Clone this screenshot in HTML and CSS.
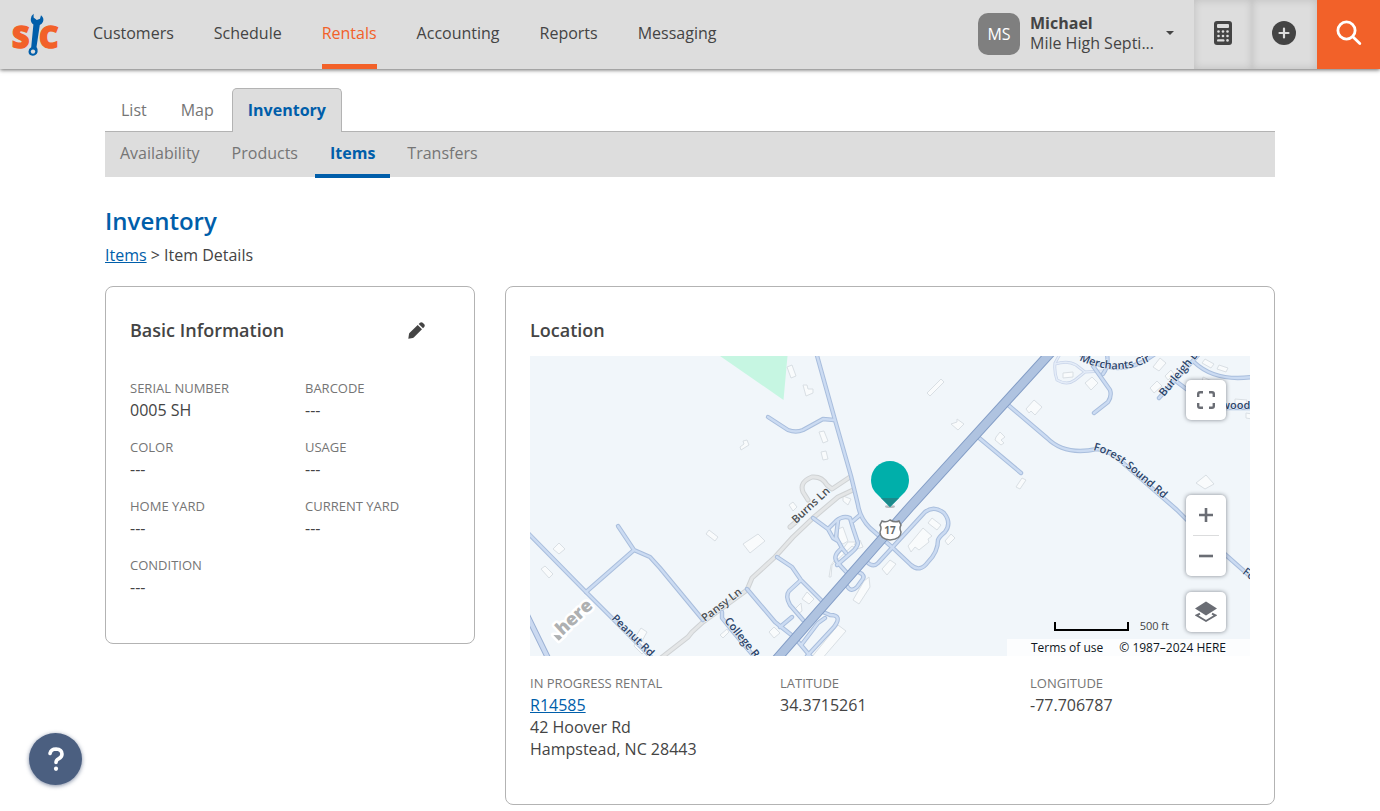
FILE: index.html
```html
<!DOCTYPE html>
<html lang="en">
<head>
<meta charset="utf-8">
<meta name="viewport" content="width=device-width, initial-scale=1">
<title>Inventory - Item Details</title>
<link rel="stylesheet" href="styles.css">
</head>
<body>
<header class="topbar">
  <a class="logo" href="#" aria-label="Home">
    <svg width="50" height="44" viewBox="10 13 50 44">
      <text class="logo-letter" x="12" y="47.500">S</text>
      <text class="logo-letter" x="39" y="47.500">C</text>
      <path class="logo-gap" d="M31 14 L30.500 19 L33 24 L31 46 L28 50 A4.700 4.700 0 1 0 37 53 L38 46 L40.500 26 L44 22 L43.500 16 L40 15 L36 19 Z"/>
      <path class="logo-wrench" d="M33.600 13.800 L33.600 17.500 L36.800 20 L40 18.800 L41 15.300 Q44.400 18 43 21.800 Q42 24 39.800 25 L36.500 47 Q38.200 49 37.600 52 Q36.300 55.800 32.600 55.800 Q28.500 55.300 28.500 51.500 Q28.600 48.500 31.200 47.200 L33.400 24.500 Q30.600 22.500 30.800 19 Q31.100 15.500 33.600 13.800 Z"/>
      <circle class="logo-hole" cx="33" cy="51.600" r="2.200"/>
    </svg>
  </a>
  <nav class="mainnav">
    <a href="#">Customers</a>
    <a href="#">Schedule</a>
    <a href="#" class="active">Rentals</a>
    <a href="#">Accounting</a>
    <a href="#">Reports</a>
    <a href="#">Messaging</a>
  </nav>
  <button class="user" type="button">
    <span class="avatar">MS</span>
    <span class="user-text"><strong>Michael</strong><span>Mile High Septi...</span></span>
    <span class="caret"></span>
  </button>
  <div class="actions">
    <button class="action calc" type="button" aria-label="Calculator">
      <svg width="18" height="24" viewBox="0 0 18 24">
        <rect width="18" height="24" rx="3" fill="#444"/>
        <rect x="3" y="3" width="12" height="4" rx="1" fill="#ddd"/>
        <g fill="#ddd">
          <circle cx="4.500" cy="10.500" r="1.300"/><circle cx="9" cy="10.500" r="1.300"/><circle cx="13.500" cy="10.500" r="1.300"/>
          <circle cx="4.500" cy="15" r="1.300"/><circle cx="9" cy="15" r="1.300"/><circle cx="13.500" cy="15" r="1.300"/>
          <rect x="3" y="18.200" width="7.500" height="2.400" rx="1.200"/><circle cx="13.500" cy="19.400" r="1.300"/>
        </g>
      </svg>
    </button>
    <button class="action add" type="button" aria-label="Add">
      <svg width="24" height="24" viewBox="0 0 24 24">
        <circle cx="12" cy="12" r="12" fill="#444"/>
        <path d="M12 7.500v9M7.500 12h9" stroke="#ddd" stroke-width="2.200" stroke-linecap="round"/>
      </svg>
    </button>
    <button class="action search" type="button" aria-label="Search">
      <svg width="26" height="26" viewBox="0 0 26 26" fill="none" stroke="#fff" stroke-width="2.800" stroke-linecap="round">
        <circle cx="10.500" cy="10.500" r="8.600"/><path d="M16.800 16.800l7 6.800"/>
      </svg>
    </button>
  </div>
</header>

<main class="container">
  <nav class="tabs">
    <a href="#">List</a>
    <a href="#">Map</a>
    <a href="#" class="active">Inventory</a>
  </nav>
  <nav class="subtabs">
    <a href="#">Availability</a>
    <a href="#">Products</a>
    <a href="#" class="active">Items</a>
    <a href="#">Transfers</a>
  </nav>

  <h1>Inventory</h1>
  <p class="crumbs"><a href="#">Items</a> &gt; Item Details</p>

  <div class="cards">
    <section class="card basic">
      <div class="card-head basic-head">
        <h2>Basic Information</h2>
        <button class="edit" type="button" aria-label="Edit basic information">
          <svg width="17" height="17" viewBox="0 0 17 17" fill="#444">
            <path d="M0.300 16.700 L1 12 Q1.200 11.300 1.700 10.800 L9.700 3 L14 7.300 L6 15.200 Q5.400 15.800 4.800 15.900 Z"/>
            <path d="M10.700 2 L12 0.800 Q13.200 -0.300 14.700 0.700 L16.300 2.300 Q17.300 3.700 16.200 5 L15 6.300 Z"/>
          </svg>
        </button>
      </div>
      <dl class="fields two">
        <div><dt>SERIAL NUMBER</dt><dd>0005 SH</dd></div>
        <div><dt>BARCODE</dt><dd>---</dd></div>
        <div><dt>COLOR</dt><dd>---</dd></div>
        <div><dt>USAGE</dt><dd>---</dd></div>
        <div><dt>HOME YARD</dt><dd>---</dd></div>
        <div><dt>CURRENT YARD</dt><dd>---</dd></div>
        <div><dt>CONDITION</dt><dd>---</dd></div>
      </dl>
    </section>

    <section class="card">
      <div class="card-head location-head"><h2>Location</h2></div>
      <div class="map">
        <svg class="map-canvas" viewBox="530 356 720 300" preserveAspectRatio="xMidYMid slice" role="img" aria-label="Map of the item location">
          <defs>
            <g id="local">
              <path d="M525 530L586 592L612 618L652 658"/>
              <path d="M618 526L634 550L650 557L660 568L703 620M634 550L586 592"/>
              <path d="M722 612L722 618L730 628L757 660M747 589L775 622L780 626L794 637M780 627L792 617"/>
              <path d="M816 352L835 420L851 476L858 505Q860 518 870 528L893 548L911 565Q920 573 928 562Q938 552 938 540Q939 537 945 532Q952 523 944 513Q934 505 925 512L878 563Q873 568 867 562"/>
              <path d="M768 417L788 430Q796 433 803 430L823 419L834 420"/>
              <path d="M978 437L1021 473"/>
              <path d="M1007 404L1047 438Q1065 456 1097 449Q1110 450 1123 463L1177 510L1190 523L1227 556L1252 578"/>
              <path d="M1080 354Q1118 382 1155 354M1093 366L1110 390Q1112 396 1108 402L1094 413M1107 354Q1109 366 1103 374"/>
              <path d="M1159 398L1199 354M1177 382L1197 397M1194 362Q1215 382 1252 377M1226 408L1252 408"/>
            </g>
            <g id="lanes">
              <path d="M813 518L828 529L836 521Q843 515 850 518L853 528L858 543Q857 548 852 552L837 565M828 529L833 538L838 541M838 521L836 537L842 548L846 553M842 548Q832 556 837 562L849 575M860 515L853 521"/>
              <path d="M855 570L862 574Q865 577 862 580L857 587Q851 593 847 586"/>
              <path d="M777 557L792 567L801 580L822 601M801 580L789 591Q785 596 790 605L803 620"/>
              <path d="M823 612L830 615Q843 615 834 627L807 656M825 618L818 623L802 644M795 638L811 657"/>
            </g>
            <g id="faint"><path d="M1103 371L1085 372L1075 380Q1067 386 1057 380Q1054 372 1055 363L1060 354M1055 364Q1068 360 1076 365L1085 372"/></g>
            <g id="lanes-grey">
              <path d="M661 658L688 637L692 632L703 622L747 590L752 578L775 557L793 537L813 518L838 497L853 490"/>
              <path d="M808 500L803 492Q799 482 812 477Q822 476 827 485L832 489L850 477M790 527L797 521"/>
            </g>
            <path id="p-merchants" d="M1079 360Q1118 379 1154 359"/>
            <path id="p-burleigh" d="M1164 397L1207 345"/>
            <path id="p-forest" d="M1093 450Q1112 455 1127 468L1174 508"/>
            <path id="p-burns" d="M796 524L842 481"/>
            <path id="p-pansy" d="M705 622L760 580"/>
            <path id="p-college" d="M724 621L766 673"/>
            <path id="p-peanut" d="M611 619L670 677"/>
          </defs>
          <rect x="-500" y="356" width="2800" height="300" fill="#f1f6fa"/>
          <path fill="#c6f6e2" d="M720 356H787.500L783.500 400Z"/>
          <g fill="#f9fbfc" stroke="#d9dfe4">
            <path d="M787 367l5-2 4 11-5 2zM803 385l4 0 1 4 5 0 0 4-7 3zM819 432l5-1 4 10-5 2zM821 452l5-1 2 8-5 1zM740 447l4-3-1-3 4-1 2 5-8 5zM927 393l14-14 3 3-14 14zM951 424l6-2 0-3 7 5-6 6z"/>
            <path d="M996 437l4-5 5 5-4 3 3 3-3 2-6-5zM1016 487l6-9 4 2-6 9zM1026 409l8-9 8 7-7 8-4-4-2 2zM1085 383l7-6 6 6-7 7zM1063 373l10-1 0 5-10 1zM1153 367l7-9 6 5-7 8zM1150 388l7-7 5 5-8 7zM1165 376l6-6 3 4-6 6z"/>
            <path d="M1205 359l9 5-3 4-9-5zM1219 365l9 3-2 4-9-3zM1203 377l9 4-2 5-8-4zM1235 399l12 1-1 6-11-1zM1246 413l6 1 0 5-6-1zM1196 483l10-8 8 9-9 5zM553 549l6-6 6 6-6 5zM541 569l4-3 8 8-4 4zM706 534l3-4 9 7-3 4zM743 544l15-10 7 7-15 12z"/>
            <path d="M636 636l5-8 6 4-5 9 7 6-7 7-8-8 2-5zM720 635l7-6 2 3-6 6zM769 632l5-5 6 6-6 5zM789 505l4-3 4 5-4 4zM838 529l5-2 5 14-5 3-4-2zM829 577l2-12 17-23 8 0-2 3 6-5 3 7-6 2-5-3-20 19-1 12zM843 496l8 3-3 6-5-4z"/>
            <path d="M882 569l8-9 6 4-9 11zM908 546l15-18 9 8-4 3 1 3-10 8-4-3-4 5zM928 523l4-5 9 7-4 5zM945 541l6-7 4 4-7 7zM853 600l11-19 5-4 1 10-11 17zM802 599l5-7 7 7-5 5zM811 658l27-33 8 6-25 29zM793 611l8-8 1 8-4 3z"/>
          </g>
          <g fill="none" stroke-linejoin="round" stroke-linecap="round">
            <use href="#lanes-grey" stroke="#cfd2d4" stroke-width="5"/>
            <use href="#lanes-grey" stroke="#e4e6e7" stroke-width="3"/>
            <use href="#faint" stroke="#c9d5e9" stroke-width="3"/>
            <use href="#faint" stroke="#e4ecf8" stroke-width="1.500"/>
            <use href="#lanes" stroke="#a9bedd" stroke-width="4.400"/>
            <use href="#local" stroke="#a9bedd" stroke-width="4.400"/>
            <use href="#lanes" stroke="#cfdef3" stroke-width="2.400"/>
            <use href="#local" stroke="#cbdbf2" stroke-width="2.400"/>
            <path d="M527 615L549 660" stroke="#9bb1d4" stroke-width="6"/>
            <path d="M527 615L549 660" stroke="#cbdaf1" stroke-width="4"/>
            <path d="M1053 350L910 507L775 661" stroke="#839dc6" stroke-width="10"/>
            <path d="M1053 350L910 507L775 661" stroke="#afc3e0" stroke-width="8"/>
          </g>
          <g class="road-names">
            <text><textPath href="#p-merchants">Merchants Cir</textPath></text>
            <text><textPath href="#p-burleigh">Burleigh Dr</textPath></text>
            <text><textPath href="#p-forest">Forest Sound Rd</textPath></text>
            <text class="grey"><textPath href="#p-burns">Burns Ln</textPath></text>
            <text class="grey"><textPath href="#p-pansy">Pansy Ln</textPath></text>
            <text><textPath href="#p-college">College Rd</textPath></text>
            <text><textPath href="#p-peanut">Peanut Rd</textPath></text>
            <text x="1221" y="409">wood</text>
            <text transform="translate(1242 573) rotate(38)">Forest</text>
          </g>
          <g transform="translate(562 631) rotate(-43)">
            <path d="M-9 -3L-1 5H-9Z" fill="#aeb0b1" stroke="#fff" stroke-width="5" stroke-linejoin="round" paint-order="stroke"/>
            <text class="here" x="-3" y="4">here</text>
          </g>
          <path d="M882 521Q886 523 890 520Q895 523 899 521L901 525Q899 528 901 532Q901 539 890 540Q880 539 880 532Q882 528 880 525Z" fill="#fff" stroke="#777a7c" stroke-width="1.500"/>
          <text class="shield" x="890" y="534">17</text>
          <ellipse cx="890" cy="506.500" rx="5" ry="1.500" fill="#b7bcc0"/>
          <path d="M890 507L875 492Q871 487 871 480A19 19 0 0 1 909 480Q909 487 905 492Z" fill="#00afaa"/>
          <path d="M881 498H899L890 507Z" fill="#1a8a8b"/>
        </svg>
        <button class="map-btn fullscreen" type="button" aria-label="Full screen">
          <svg width="18" height="18" viewBox="0 0 18 18" fill="none" stroke="#6a6d74" stroke-width="2.400"><path d="M1.200 6V3Q1.200 1.200 3 1.200H6M12 1.200H15Q16.800 1.200 16.800 3V6M16.800 12V15Q16.800 16.800 15 16.800H12M6 16.800H3Q1.200 16.800 1.200 15V12"/></svg>
        </button>
        <div class="zoom">
          <button type="button" aria-label="Zoom in"><svg width="14" height="14" viewBox="0 0 14 14" stroke="#6a6d74" stroke-width="2.600"><path d="M7 0V14M0 7H14"/></svg></button>
          <button type="button" aria-label="Zoom out"><svg width="14" height="14" viewBox="0 0 14 14" stroke="#6a6d74" stroke-width="2.600"><path d="M0 7H14"/></svg></button>
        </div>
        <button class="map-btn layers" type="button" aria-label="Map layers">
          <svg width="22" height="22" viewBox="0 0 22 22"><path d="M11 0.500L22 7.500L11 14.500L0 7.500Z" fill="#6a6d74"/><path d="M5 12.600L1.500 14.300L11 20L20.500 14.300L17 12.600" fill="none" stroke="#6a6d74" stroke-width="1.900"/></svg>
        </button>
        <div class="scale"><span class="scale-bar"></span>500 ft</div>
        <div class="map-legal"><a href="#">Terms of use</a><span>© 1987–2024 HERE</span></div>
      </div>
      <dl class="fields three">
        <div><dt>IN PROGRESS RENTAL</dt><dd><a href="#">R14585</a><br>42 Hoover Rd<br>Hampstead, NC 28443</dd></div>
        <div><dt>LATITUDE</dt><dd>34.3715261</dd></div>
        <div><dt>LONGITUDE</dt><dd>-77.706787</dd></div>
      </dl>
    </section>
  </div>
</main>

<button class="help" type="button" aria-label="Help">
  <svg width="18" height="24" viewBox="0 0 18 24" fill="none" stroke="#fff" stroke-width="3.600" stroke-linecap="round"><path d="M3 6.500Q4 2 9 2Q15 2.300 15 7Q15 10 11.500 11.800Q9 13.200 9 15.500"/><path d="M9 21.700V21.800" stroke-width="4.200"/></svg>
</button>
</body>
</html>
```

FILE: styles.css
```css
* { box-sizing: border-box; }

body {
  margin: 0;
  background: #fff;
  color: #444;
  font-family: "Open Sans", "Noto Sans", sans-serif;
  font-size: 16px;
  line-height: 22px;
}

button {
  margin: 0;
  padding: 0;
  border: 0;
  background: none;
  color: inherit;
  font: inherit;
  cursor: pointer;
}

svg { display: block; }
a { color: #005eaa; }
h1, h2, p, dl, dt, dd { margin: 0; }

/* Top bar */
.topbar {
  display: flex;
  align-items: stretch;
  height: 69px;
  background: #ddd;
  box-shadow: 0 1px 4px rgba(0, 0, 0, .6);
}

.logo { padding: 13px 0 0 10px; }
.logo-letter { font-size: 30px; font-weight: 800; fill: #f26129; stroke: #f26129; stroke-width: 1.4px; }
.logo-gap { fill: #ddd; }
.logo-wrench { fill: #005eaa; }
.logo-hole { fill: #ddd; }

.mainnav { display: flex; gap: 40px; margin-left: 33px; }
.mainnav a {
  padding-top: 22px;
  border-bottom: 5px solid transparent;
  color: #444;
  text-decoration: none;
}
.mainnav a.active { color: #f26129; border-color: #f26129; }

.user {
  display: flex;
  align-items: center;
  margin-left: auto;
  padding: 0 20px 2px 0;
  line-height: 20px;
  text-align: left;
}
.avatar {
  width: 42px;
  border-radius: 10px;
  background: #7f7f7f;
  color: #fff;
  line-height: 42px;
  text-align: center;
}
.user-text { display: flex; flex-direction: column; margin: 0 12px 0 10px; padding-bottom: 2px; }
.caret {
  border: 4px solid transparent;
  border-top-color: #444;
  border-bottom: 0;
  margin-bottom: 2px;
}

.actions { display: flex; }
.action {
  display: flex;
  align-items: center;
  justify-content: center;
  padding-bottom: 3px;
  box-shadow: inset 0 0 9px rgba(0, 0, 0, .14);
}
.calc { width: 58px; }
.add { width: 65px; padding-right: 2px; }
.search { width: 63px; background: #f26129; box-shadow: none; }

/* Page */
.container { max-width: 1170px; margin: 0 auto; padding: 19px 0 6px; }

.tabs { display: flex; gap: 2px; }
.tabs a {
  height: 43px;
  padding: 10px 15px 0;
  border: 1px solid transparent;
  border-bottom: 0;
  border-radius: 5px 5px 0 0;
  color: #757575;
  text-decoration: none;
}
.tabs a.active {
  position: relative;
  height: 44px;
  margin-bottom: -1px;
  border-color: #b3b3b3;
  background: #ddd;
  color: #005eaa;
  font-weight: 700;
}

.subtabs {
  display: flex;
  gap: 2px;
  height: 46px;
  border-top: 1px solid #b3b3b3;
  background: #ddd;
}
.subtabs a {
  height: 46px;
  padding: 10px 15px 0;
  border-bottom: 4px solid transparent;
  color: #757575;
  text-decoration: none;
}
.subtabs a.active { border-color: #005eaa; color: #005eaa; font-weight: 700; }

h1 {
  margin-top: 28px;
  color: #005eaa;
  font-size: 24px;
  font-weight: 600;
  line-height: 32px;
}
.crumbs { margin-top: 7px; }

.cards {
  display: grid;
  grid-template-columns: 37fr 77fr;
  gap: 30px;
  align-items: start;
  margin-top: 20px;
}
.card {
  min-width: 0;
  padding: 23px 24px 44px;
  border: 1px solid #b3b3b3;
  border-radius: 8px;
}
.basic { padding-bottom: 45px; }
.card-head { display: flex; align-items: center; justify-content: space-between; height: 40px; }
.basic-head { margin-bottom: 27px; padding-right: 25px; }
.location-head { margin-bottom: 6px; }
h2 { font-size: 18px; font-weight: 600; }

.fields { display: grid; gap: 15px 30px; }
.two { grid-template-columns: repeat(2, minmax(0, 1fr)); }
.three { grid-template-columns: repeat(3, minmax(0, 1fr)); margin-top: 16px; }
dt { color: #757575; font-size: 13px; }

/* Map */
.map { position: relative; height: 300px; overflow: hidden; background: #f1f6fa; }
.map-canvas { width: 100%; height: 100%; }
.road-names { fill: #2c456b; font-size: 11px; font-weight: 600; stroke: #f1f6fa; stroke-width: 1px; paint-order: stroke; }
.road-names .grey { fill: #4b4f52; }
.here { fill: #aeb0b1; font-size: 18px; font-weight: 800; stroke: #fff; stroke-width: 5px; stroke-linejoin: round; paint-order: stroke; }
.shield { fill: #66696b; font-size: 10px; font-weight: 700; text-anchor: middle; }

.map-btn, .zoom {
  position: absolute;
  right: 24px;
  width: 40px;
  border-radius: 5px;
  background: #fff;
  box-shadow: 0 0 4px rgba(15, 22, 33, .5);
}
.map-btn { display: flex; align-items: center; justify-content: center; height: 40px; }
.fullscreen { top: 24px; }
.zoom { top: 139px; height: 81px; }
.zoom button { display: flex; align-items: center; justify-content: center; width: 40px; height: 40px; }
.zoom button + button { border-top: 1px solid #dbdcdd; width: 26px; margin: 0 7px; height: 41px; }
.layers { bottom: 24px; }

.scale {
  position: absolute;
  right: 81px;
  bottom: 22px;
  display: flex;
  align-items: center;
  gap: 11px;
  color: #444;
  font-size: 11px;
  line-height: 16px;
}
.scale-bar { width: 75px; height: 9px; border: 2px solid #000; border-top: 0; }
.map-legal {
  position: absolute;
  right: 0;
  bottom: 0;
  display: flex;
  gap: 16px;
  padding: 0 24px;
  background: rgba(255, 255, 255, .8);
  color: #0f1621;
  font-size: 12px;
  line-height: 17px;
}
.map-legal a { color: inherit; text-decoration: none; }

.help {
  position: fixed;
  left: 29px;
  bottom: 26px;
  display: flex;
  align-items: center;
  justify-content: center;
  width: 53px;
  height: 52px;
  border-radius: 50%;
  background: #4b5f80;
  box-shadow: 0 1px 4px rgba(40, 60, 100, .6);
}
```
